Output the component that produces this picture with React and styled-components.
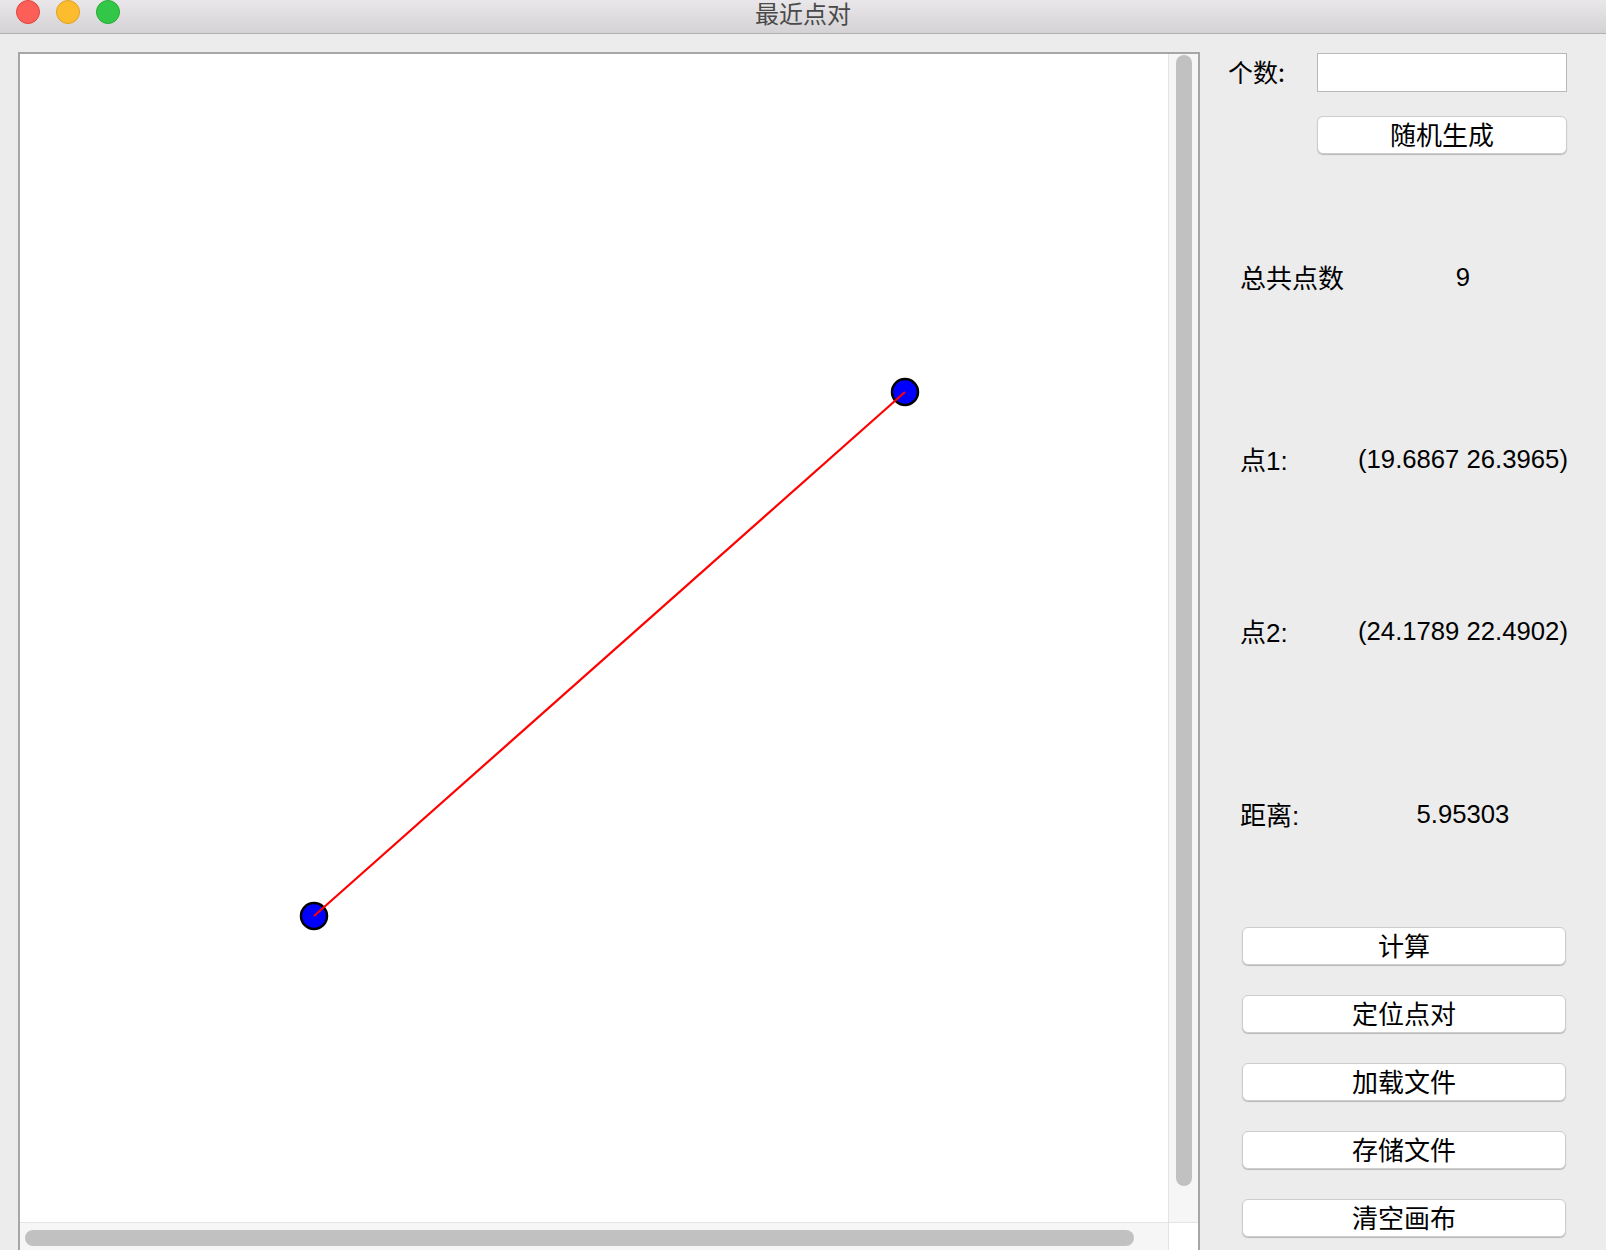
import React from "react";
import styled, { createGlobalStyle } from "styled-components";

const Global = createGlobalStyle`
  html, body { margin: 0; padding: 0; background: #ececec; overflow: hidden; }
  body { font-family: "Liberation Sans", "Noto Sans CJK SC", sans-serif; }
  * { box-sizing: border-box; }
`;

const Window = styled.div`
  width: 1606px;
  height: 1250px;
  overflow: hidden;
  background: #ececec;
  display: flex;
  flex-direction: column;
`;

const TitleBar = styled.div`
  height: 34px;
  flex-shrink: 0;
  display: grid;
  grid-template-columns: 1fr auto 1fr;
  align-items: start;
  background: linear-gradient(#e9e7e9, #d4d2d4);
  border-bottom: 1px solid #b1b1b1;
`;

const Lights = styled.div`
  display: flex;
  gap: 16px;
  padding-left: 16px;
`;

const Light = styled.span`
  width: 24px;
  height: 24px;
  border-radius: 50%;
  background: ${(p) => p.$fill};
  border: 1px solid ${(p) => p.$edge};
`;

const Title = styled.div`
  font-family: "Noto Sans CJK SC", sans-serif;
  font-size: 24px;
  line-height: 24px;
  padding-top: 1px;
  color: #4a4a4a;
`;

const Body = styled.div`
  flex: 1;
  display: flex;
  padding-left: 18px;
  overflow: hidden;
`;

const CanvasFrame = styled.div`
  margin-top: 18px;
  width: 1182px;
  height: 1202px;
  flex-shrink: 0;
  border: 2px solid #a6a6a6;
  display: grid;
  grid-template-columns: 1fr 30px;
  grid-template-rows: 1fr 30px;
  background: #fff;
`;

const Canvas = styled.div`
  background: #fff;
  overflow: hidden;
`;

const VTrack = styled.div`
  background: #f6f6f6;
  border-left: 1px solid #e4e4e4;
  padding: 1px 0 0 7px;
`;

const VThumb = styled.div`
  width: 16px;
  height: ${(p) => p.$len}px;
  border-radius: 8px;
  background: #c1c1c1;
`;

const HTrack = styled.div`
  background: #f6f6f6;
  border-top: 1px solid #e4e4e4;
  padding: 7px 0 0 5px;
`;

const HThumb = styled.div`
  height: 16px;
  width: ${(p) => p.$len}px;
  border-radius: 8px;
  background: #c1c1c1;
`;

const Corner = styled.div`
  background: #fff;
  border-top: 1px solid #e4e4e4;
  border-left: 1px solid #e4e4e4;
`;

const Side = styled.div`
  flex: 1;
  display: flex;
  flex-direction: column;
  padding: 19px 39px 0 28px;
  color: #000;
`;

const CountRow = styled.div`
  display: flex;
  align-items: center;
  height: 39px;
`;

const FieldLabel = styled.span`
  width: 89px;
  padding-bottom: 4px;
  font-family: "Noto Sans CJK SC", sans-serif;
  font-size: 25px;
`;

const Input = styled.div`
  width: 250px;
  height: 39px;
  background: #fff;
  border: 1px solid #b9b9b9;
`;

const ActionRow = styled.div`
  margin-top: 24px;
  padding-left: 89px;
`;

const Button = styled.div`
  width: ${(p) => p.$w}px;
  height: 38px;
  padding-bottom: 3px;
  background: #fff;
  border: 1px solid #cdcdcd;
  border-radius: 6px;
  box-shadow: 0 1px 1px rgba(0, 0, 0, 0.22);
  display: flex;
  align-items: center;
  justify-content: center;
  font-family: "Noto Sans CJK SC", sans-serif;
  font-size: 26px;
  line-height: 1;
  color: #000;
`;

const StatRow = styled.div`
  margin-top: ${(p) => p.$gap}px;
  display: grid;
  grid-template-columns: 118px 1fr;
  padding-left: 12px;
  height: 30px;
  align-items: center;
`;

const StatLabel = styled.span`
  padding-bottom: 2px;
  font-family: "Liberation Sans", "Noto Sans CJK SC", sans-serif;
  font-size: 26px;
`;

const StatValue = styled.span`
  text-align: center;
  font-family: "Liberation Sans", sans-serif;
  font-size: 25.7px;
  white-space: nowrap;
`;

const ButtonStack = styled.div`
  margin-top: 102px;
  padding-left: 14px;
  display: flex;
  flex-direction: column;
  gap: 30px;
`;

const stats = [
  { label: "总共点数", value: "9", gap: 104 },
  { label: "点1:", value: "(19.6867 26.3965)", gap: 152 },
  { label: "点2:", value: "(24.1789 22.4902)", gap: 142 },
  { label: "距离:", value: "5.95303", gap: 153 },
];

const actions = ["计算", "定位点对", "加载文件", "存储文件", "清空画布"];

const p1 = { x: 885, y: 338 };
const p2 = { x: 294, y: 862 };

export default function App() {
  return (
    <>
      <Global />
      <Window>
        <TitleBar>
          <Lights>
            <Light $fill="#fc5f57" $edge="#e0443e" />
            <Light $fill="#fdbc2e" $edge="#dea123" />
            <Light $fill="#33c748" $edge="#27aa35" />
          </Lights>
          <Title>最近点对</Title>
          <div />
        </TitleBar>
        <Body>
          <CanvasFrame>
            <Canvas>
              <svg width="1148" height="1168" viewBox="0 0 1148 1168">
                <circle cx={p1.x} cy={p1.y} r="13" fill="#0000ff" stroke="#000" strokeWidth="2.5" />
                <circle cx={p2.x} cy={p2.y} r="13" fill="#0000ff" stroke="#000" strokeWidth="2.5" />
                <line x1={p1.x} y1={p1.y} x2={p2.x} y2={p2.y} stroke="#ff0000" strokeWidth="2.2" />
              </svg>
            </Canvas>
            <VTrack>
              <VThumb $len={1131} />
            </VTrack>
            <HTrack>
              <HThumb $len={1109} />
            </HTrack>
            <Corner />
          </CanvasFrame>
          <Side>
            <CountRow>
              <FieldLabel>个数:</FieldLabel>
              <Input />
            </CountRow>
            <ActionRow>
              <Button $w={250}>随机生成</Button>
            </ActionRow>
            {stats.map((s) => (
              <StatRow key={s.label} $gap={s.gap}>
                <StatLabel>{s.label}</StatLabel>
                <StatValue>{s.value}</StatValue>
              </StatRow>
            ))}
            <ButtonStack>
              {actions.map((a) => (
                <Button key={a} $w={324}>
                  {a}
                </Button>
              ))}
            </ButtonStack>
          </Side>
        </Body>
      </Window>
    </>
  );
}
